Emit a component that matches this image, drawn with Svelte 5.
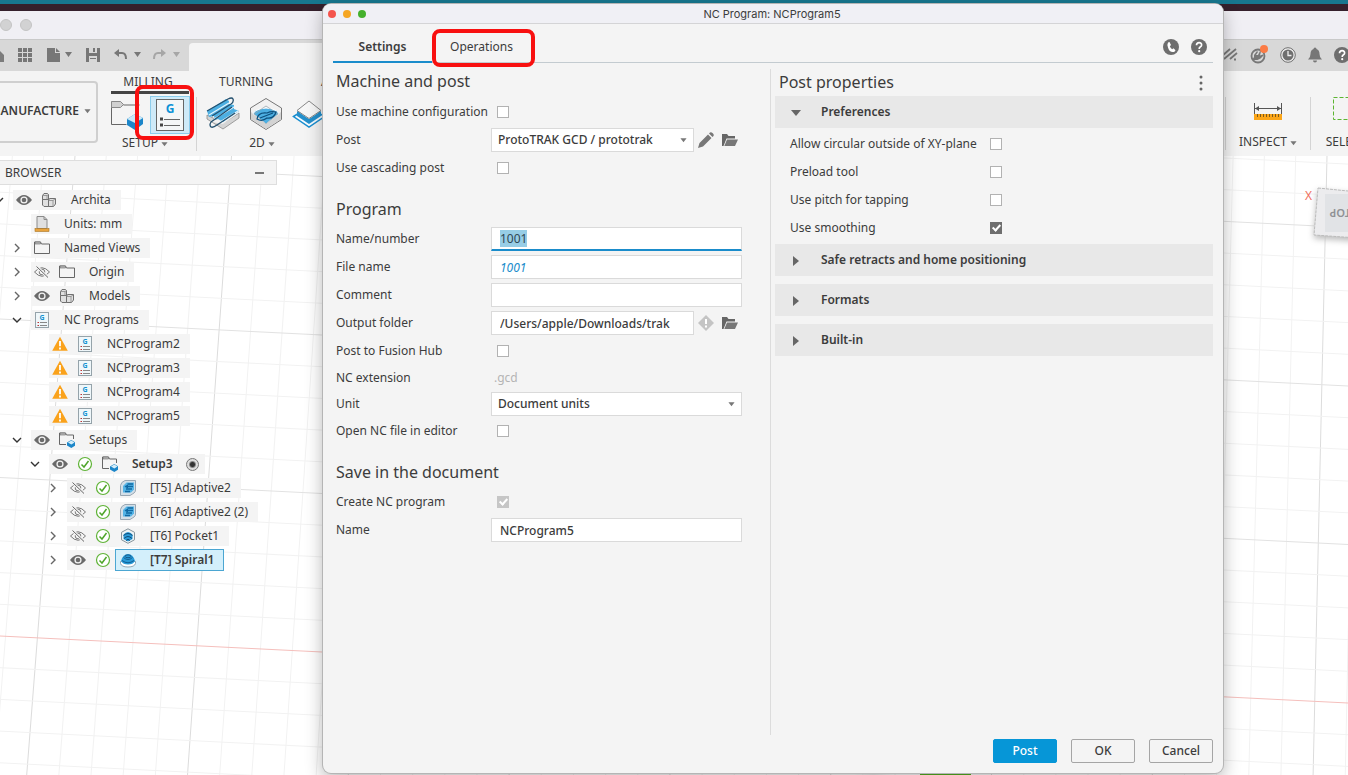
<script lang="ts">
    import { onMount } from 'svelte';

    type Row = {
        depth: number;
        arrow?: 'open' | 'closed';
        icons: string[];
        label: string;
        bold?: boolean;
        radio?: boolean;
        selected?: boolean;
    };

    const tree: Row[] = [
        { depth: 0, arrow: 'open', icons: ['eye', 'bodies'], label: 'Archita' },
        { depth: 1, icons: ['units'], label: 'Units: mm' },
        { depth: 1, arrow: 'closed', icons: ['folder'], label: 'Named Views' },
        { depth: 1, arrow: 'closed', icons: ['hidden', 'folder'], label: 'Origin' },
        { depth: 1, arrow: 'closed', icons: ['eye', 'bodies'], label: 'Models' },
        { depth: 1, arrow: 'open', icons: ['nc'], label: 'NC Programs' },
        { depth: 2, icons: ['warning', 'nc'], label: 'NCProgram2' },
        { depth: 2, icons: ['warning', 'nc'], label: 'NCProgram3' },
        { depth: 2, icons: ['warning', 'nc'], label: 'NCProgram4' },
        { depth: 2, icons: ['warning', 'nc'], label: 'NCProgram5' },
        { depth: 1, arrow: 'open', icons: ['eye', 'setup'], label: 'Setups' },
        { depth: 2, arrow: 'open', icons: ['eye', 'ok', 'setup'], label: 'Setup3', bold: true, radio: true },
        { depth: 3, arrow: 'closed', icons: ['hidden', 'ok', 'adaptive'], label: '[T5] Adaptive2' },
        { depth: 3, arrow: 'closed', icons: ['hidden', 'ok', 'adaptive'], label: '[T6] Adaptive2 (2)' },
        { depth: 3, arrow: 'closed', icons: ['hidden', 'ok', 'pocket'], label: '[T6] Pocket1' },
        { depth: 3, arrow: 'closed', icons: ['eye', 'ok', 'spiral'], label: '[T7] Spiral1', bold: true, selected: true },
    ];

    // the ground grid, seen slightly from the side
    const columns = Array.from({ length: 46 }, (_, k) => k - 3).map((i) => ({
        x1: 75 + 31.3 * i,
        x2: 26.7 + 32.16 * i,
        major: i % 5 === 0,
    }));
    const rows = Array.from({ length: 26 }, (_, k) => k - 19).map((j) => ({
        y1: 480 + 31.7 * j,
        y2: 547 + 31.7 * j,
        major: j % 5 === 0,
        axis: j === 0,
    }));

    let tab = $state('settings');
    let useMachine = $state(false);
    let cascading = $state(false);
    let toHub = $state(false);
    let openInEditor = $state(false);
    let nameNumber = $state('1001');
    let fileName = $state('1001');
    let comment = $state('');
    let folder = $state('/Users/apple/Downloads/trak');
    let programName = $state('NCProgram5');

    let preferences = $state([
        { id: 'circular', label: 'Allow circular outside of XY-plane', on: false },
        { id: 'preload', label: 'Preload tool', on: false },
        { id: 'pitch', label: 'Use pitch for tapping', on: false },
        { id: 'smoothing', label: 'Use smoothing', on: true },
    ]);
    let preferencesOpen = $state(true);
    const closedSections = ['Safe retracts and home positioning', 'Formats', 'Built-in'];

    let nameInput: HTMLInputElement;

    onMount(() => {
        nameInput.focus();
        nameInput.select();
    });
</script>

{#snippet caret()}
    <svg class="caret" width="8" height="5" viewBox="0 0 8 5"><path d="M0.500 0h7L4 4.500z" fill="#777" /></svg>
{/snippet}

{#snippet icon(name)}
    <svg class="icon" width="16" height="16" viewBox="0 0 16 16" fill="none">
        {#if name === 'eye'}
            <path d="M0 8Q8-2 16 8Q8 18 0 8z" fill="#6a6a6a" />
            <circle cx="8" cy="8" r="3.6" fill="#f4f4f4" />
            <circle cx="8" cy="8" r="2.3" fill="#6a6a6a" />
        {:else if name === 'hidden'}
            <path d="M0.5 8Q8-0.5 15.5 8Q8 16.5 0.5 8z" stroke="#777" />
            <circle cx="8" cy="8" r="2.8" stroke="#777" />
            <path d="M2.5 2.5l11.5 11" stroke="#f4f4f4" stroke-width="3" />
            <path d="M2.5 2.5l11.5 11" stroke="#666" />
        {:else if name === 'bodies'}
            <path d="M1.500 3.500l1.500-2h3.500l1 1v5h-6zM1.500 7.500h6v7h-4.500l-1.500-1.500zM7.500 8.500l1-2h6v5.500l-2 2.500h-5z" fill="#e0e0e0" stroke="#707070" />
            <path d="M7.500 8.500h4.500v6M12 8.500l2.500-2M1.500 3.500h4.500v4M6 3.500l1.500-1" stroke="#888" stroke-width="0.800" />
        {:else if name === 'units'}
            <path d="M3 0.500h7l3 3v9h-10z" fill="#e0e0e0" stroke="#8a8a8a" />
            <path d="M10 0.500v3h3" stroke="#8a8a8a" />
            <rect x="1" y="12.500" width="14" height="3" fill="#e8a33d" stroke="#a87423" stroke-width="0.600" />
        {:else if name === 'folder'}
            <path d="M0.500 13.500V2h6l1 2h8v9.500z" stroke="#666" />
            <path d="M1 2h5.500v2H1z" fill="#bbb" stroke="#666" stroke-width="0.600" />
        {:else if name === 'setup'}
            <path d="M7 12.500H0.500V1h6l1 2h7v4" stroke="#666" />
            <path d="M1 1h5.500v2H1z" fill="#bbb" stroke="#666" stroke-width="0.600" />
            <path d="M8 10.500l4.300-2.500 4.200 2.500v3L12.300 16 8 13.500z" fill="#1c86c9" />
            <path d="M9 10.600l3.300-2 3.200 2-3.200 1.900z" fill="#d5eefa" />
        {:else if name === 'nc'}
            <rect x="1.500" y="0.500" width="13" height="15" fill="#eff7fa" stroke="#95a3aa" />
            <text x="8" y="7.500" font-size="7" font-weight="700" text-anchor="middle" fill="#1592d2">G</text>
            <path d="M3.500 10.500h1.500M3.500 13.500h1.500" stroke="#b33" />
            <path d="M6 10.500h7M6 13.500h7" stroke="#888" />
        {:else if name === 'warning'}
            <path d="M8 0.800l7.800 14H0.200z" fill="#faa21b" />
            <path d="M8 5v5.200M8 11.500v2" stroke="#fff" stroke-width="1.800" />
        {:else if name === 'ok'}
            <circle cx="8" cy="8" r="6.500" fill="#fff" stroke="#5fb336" stroke-width="1.200" />
            <path d="M4.500 8.500l2.500 2.500 4.500-6" stroke="#4ea52a" stroke-width="1.500" />
        {:else if name === 'adaptive'}
            <path d="M5 0.500h10.500v9.500q0 2-1.500 3t-4 2.500H0.500V5.500Q1 2 5 0.500z" fill="#d3dfe8" stroke="#99a7b3" />
            <path d="M6.500 2.500h7.500v7l-3 3H3V6z" fill="#55b4e6" />
            <path d="M13 4H7.500M13 6.500H5.500M12 9H6M10 11.500H5" stroke="#0f68a3" stroke-width="1.300" />
            <path d="M8 4.500L4.500 6.500 8 8.500z" fill="#0f68a3" />
        {:else if name === 'pocket'}
            <path d="M8 0.800l6.500 3.500v7.500L8 15.300 1.500 11.800V4.300z" fill="#eef3f5" stroke="#87949b" />
            <path d="M3.500 6.500Q8 1.500 12.500 6.500v4.500L8 13.500 3.500 11z" fill="#2a9bd8" />
            <path d="M3.500 7.500q4.500-4 9 0M4 10.500q4-4 8 0M6 12.500q2-2.500 4 0" stroke="#0c4a78" />
        {:else if name === 'spiral'}
            <path d="M0.500 9.500v2q1 3.500 7.500 3.500t7.500-3.500v-2z" fill="#fff" stroke="#92a7b5" />
            <path d="M1 9Q3 2 8 2t7 7q-2 3.500-7 3.500T1 9z" fill="#2a9bd8" />
            <ellipse cx="8" cy="4.300" rx="3" ry="1.400" stroke="#0c4a78" stroke-width="0.800" />
            <path d="M3.500 5.500q4.500 4 9 0M2 8.500q6 4.500 12 0" stroke="#0c5a90" stroke-width="0.900" />
        {/if}
    </svg>
{/snippet}

{#snippet openFolder()}
    <svg width="16" height="14" viewBox="0 0 16 14"><path d="M0 13V1h5l1.500 2H13v2.500H4.500L1.500 13z" fill="#666" /><path d="M5 6.500h11L13 13H2.300z" fill="#777" /></svg>
{/snippet}

{#snippet question(size)}
    <svg width={size} height={size} viewBox="0 0 16 16">
        <circle cx="8" cy="8" r="8" fill="#6e6e6e" />
        <path d="M5.500 6.300Q5.500 3.700 8.100 3.700T10.600 6.100Q10.600 7.300 9.200 8.100Q8.200 8.700 8.200 9.900" fill="none" stroke="#fff" stroke-width="1.700" />
        <circle cx="8.200" cy="12.200" r="1.100" fill="#fff" />
    </svg>
{/snippet}

<div class="desktop">
    <div class="menu-strip"></div>

    <div class="titlebar">
        <span class="dot"></span>
        <span class="dot"></span>
    </div>

    <div class="quickbar">
        <div class="quick-tools">
            <svg width="190" height="28" viewBox="0 0 190 28">
                <path d="M-8 13l6-6 6 6v7h-4z" fill="#7c7c7c" />
                <g fill="#777">
                    {#each [0, 5, 10] as y}
                        {#each [0, 5, 10] as x}
                            <rect x={18 + x} y={6 + y} width="4" height="4" />
                        {/each}
                    {/each}
                    <path d="M47 6h8v5h5v9H47z" />
                    <path d="M56 6l4 4h-4z" />
                    <path d="M86 6h14v14H86zM89 6v5h8V6zM89 14v6h8v-6z" fill-rule="evenodd" />
                    <rect x="93" y="6" width="2" height="4" />
                    <rect x="90" y="16" width="6" height="1" />
                    <path d="M65 10h7l-3.500 5zM134 10h7l-3.500 5z" />
                    <path d="M119 7v8l-5-4z" />
                </g>
                <path d="M118 11h4q4 0 4 6" fill="none" stroke="#777" stroke-width="2" />
                <g fill="#a6a6a6">
                    <path d="M161 7v8l5-4zM173 10h7l-3.500 5z" />
                    <path d="M162 11h-4q-4 0-4 6" fill="none" stroke="#a6a6a6" stroke-width="2" />
                </g>
            </svg>
        </div>
        <div class="doc-tab"></div>
        <div class="account">
            <svg width="16" height="16" viewBox="0 0 16 16" fill="none" stroke="#777" stroke-width="1.800"><path d="M0 9l8-7M2 12L14 2M8 12l7-6" /><path d="M12 12.500h2" /></svg>
            <svg width="18" height="20" viewBox="0 0 18 20">
                <circle cx="8" cy="11" r="6.500" fill="none" stroke="#777" stroke-width="1.800" />
                <path d="M2 15l2-3 0-2 3-4 1 1-2 3 2 0 2-4 1 0.500-1 4 3-1 0.500 1-3 3-3 1.500z" fill="#777" />
                <circle cx="14" cy="4" r="4" fill="#fb7b45" />
            </svg>
            <svg width="16" height="16" viewBox="0 0 16 16"><circle cx="8" cy="8" r="7.300" fill="#eee" stroke="#6f6f6f" /><circle cx="8" cy="8" r="5.500" fill="#6f6f6f" /><path d="M8 4v4.500h3.500" fill="none" stroke="#eee" stroke-width="1.300" /></svg>
            <svg width="14" height="16" viewBox="0 0 14 16"><path d="M7 0.500q1.500 0 1.500 1.500Q11.500 3 11.500 7q0 3.500 2.500 5.500H0Q2.500 10.500 2.500 7 2.500 3 5.500 2 5.500 0.500 7 0.500zM5 13.500h4q0 2-2 2t-2-2z" fill="#777" /></svg>
            {@render question(16)}
        </div>
    </div>

    <div class="ribbon">
        <button class="workspace">MANUFACTURE {@render caret()}</button>
        <div class="ribbon-main">
            <nav class="ribbon-tabs">
                <a href="#milling" class="active">MILLING</a>
                <a href="#turning">TURNING</a>
                <a href="#additive">ADDITIVE</a>
            </nav>
            <div class="tools">
                <div class="group setup-group">
                    <div class="group-icons">
                        <svg width="34" height="36" viewBox="0 0 34 36">
                            <path d="M0.500 27.500V5h9l3 3h16M0.500 27.500h15" fill="none" stroke="#666" />
                            <path d="M0.500 4.500h9l3 3-3 3h-9z" fill="#d0d0d0" stroke="#888" />
                            <path d="M16 22l8-5 8 4v6l-8 6-8-5z" fill="#1c86c9" />
                            <path d="M16 22l8-5 8 4-8 5z" fill="#c9e9f8" />
                        </svg>
                        <span class="nc-button">
                            <svg width="28" height="32" viewBox="0 0 28 32">
                                <rect x="0.500" y="0.500" width="27" height="31" fill="#f4f6f7" stroke="#666" />
                                <text x="14" y="14" font-size="12" font-weight="700" text-anchor="middle" fill="#0d92d6">G</text>
                                <path d="M4 20h3M4 26h3" stroke="#444" stroke-width="3" />
                                <path d="M8 20.500h16M8 26.500h16" stroke="#666" />
                            </svg>
                        </span>
                    </div>
                    <span class="group-label">SETUP {@render caret()}</span>
                </div>
                <div class="group group-2d">
                    <div class="group-icons">
                        <svg width="34" height="34" viewBox="0 0 34 34">
                            <path d="M1 18v4l16 10 16-11v-5L17 26z" fill="#d4d4d4" stroke="#8a8a8a" stroke-width="0.800" />
                            <path d="M6 25L22 15l10 1-15 11z" fill="#f2f2f2" />
                            <path d="M1 14L20 2l3 2v3l5 1v4l5 2-16 11-5-3-3 1-1-4-5 1z" fill="#4dafe2" />
                            <path d="M3 18L23 6M8 22l20-12M14 25l18-11" stroke="#e8f5fc" stroke-width="1.200" />
                            <path d="M1 14L22 2q4-2 5 0 1 3-2 5L6 19M5 25q-2 3 0 5 2 1 6-2l18-12M5 25L26 10" fill="none" stroke="#24506e" stroke-width="1.300" />
                        </svg>
                        <svg width="34" height="34" viewBox="0 0 34 34">
                            <path d="M17 1.500l15.500 9.500v11.500L17 32.500 1.500 22.500V11z" fill="#f1f1f1" stroke="#777" />
                            <path d="M2 15l15 12 15-12v7L17 32 2 22z" fill="#d3d3d3" />
                            <path d="M7 13.500q10-5 20 0l3 3L17 27 4 16.500z" fill="#4dafe2" stroke="#fff" />
                            <path d="M17 9l12 8-12 10L5 17z" fill="none" stroke="#9ba7ae" stroke-width="0.800" />
                            <path d="M8 22q1-7 10-6 4-2 9-1-2 7-9 6-5 4-10 1zM11 21l13-5" fill="none" stroke="#0d4f7c" stroke-width="1.200" />
                        </svg>
                        <svg width="34" height="34" viewBox="0 0 34 34">
                            <path d="M1.500 19.500L17 10l15.500 9.500L17 30z" fill="#f8fcff" stroke="#1c8fd0" stroke-width="1.500" />
                            <path d="M5 14l12 8 12-8v5l-12 8-12-8z" fill="#2490cc" />
                            <path d="M17 4l12 9.500-12 8-12-8z" fill="#f7f7f7" stroke="#888" />
                        </svg>
                    </div>
                    <span class="group-label">2D {@render caret()}</span>
                </div>
            </div>
        </div>
        <div class="ribbon-end">
            <div class="group inspect">
                <svg width="30" height="36" viewBox="0 0 30 36">
                    <path d="M1.500 6v11M28.500 6v11M2 11.500h26" stroke="#555" />
                    <path d="M2 11.500l4-2.500v5zM28 11.500l-4-2.500v5z" fill="#555" />
                    <rect x="1" y="17" width="28" height="6" fill="#fba61a" />
                    <path d="M4.500 17v3M7.500 17v3M10.500 17v3M13.500 17v3M16.500 17v3M19.500 17v3M22.500 17v3M25.500 17v3" stroke="#7b5a1c" />
                </svg>
                <span class="group-label">INSPECT {@render caret()}</span>
            </div>
            <div class="group select-group">
                <svg width="44" height="36" viewBox="0 0 44 36"><rect x="9.500" y="0.500" width="32" height="22" fill="none" stroke="#5cb531" stroke-dasharray="4 2" /></svg>
                <span class="group-label">SELECT</span>
            </div>
        </div>
        <div class="mark mark-tool"></div>
    </div>

    <main class="canvas">
        <svg class="scene" viewBox="0 0 1348 619" preserveAspectRatio="xMinYMin slice">
            {#each columns as line}
                <line x1={line.x1} y1="0" x2={line.x2} y2="619" stroke={line.major ? '#dcdcdc' : '#f2f2f2'} />
            {/each}
            {#each rows as line}
                <line x1="0" y1={line.y1} x2="1348" y2={line.y2} stroke={line.axis ? '#f5bfbc' : line.major ? '#e2e2e2' : '#f2f2f2'} />
            {/each}
            <rect x="920" y="615" width="51" height="4" fill="#57b520" />
            <g filter="drop-shadow(0 3px 3px #bbb)">
                <path d="M1318 32l40 4v46l-44-3z" fill="#ececee" stroke="#bbb" stroke-dasharray="3 1" />
                <path d="M1325 38h31v38h-31z" fill="#e1e3e6" />
            </g>
            <text x="1305" y="44" font-size="12" fill="#f0705e">X</text>
            <text x="-1351" y="-53" font-size="11" font-weight="600" fill="#8f9195" transform="rotate(180)">TOP</text>
        </svg>

        <aside class="browser">
            <header>
                <span>BROWSER</span>
                <span class="minus"></span>
            </header>
            {#each tree as row}
                <div class="row" style="margin-left: {row.depth * 18 - 15}px">
                    <span class="arrow">
                        {#if row.arrow}
                            <svg width="10" height="10" viewBox="0 0 10 10" fill="none" stroke={row.arrow === 'open' ? '#333' : '#666'} stroke-width="1.400">
                                <path d={row.arrow === 'open' ? 'M1 3l4 4 4-4' : 'M3 1l4 4-4 4'} />
                            </svg>
                        {/if}
                    </span>
                    <span class="chip" class:has-selection={row.selected}>
                        {#each row.icons.slice(0, -1) as name}
                            {@render icon(name)}
                        {/each}
                        <span class="item" class:selected={row.selected}>
                            {@render icon(row.icons[row.icons.length - 1])}
                            <span class="name" class:bold={row.bold}>{row.label}</span>
                        </span>
                        {#if row.radio}
                            <input type="radio" name="active-setup" aria-label="Active setup" checked />
                        {/if}
                    </span>
                </div>
            {/each}
        </aside>
    </main>

    <div class="dialog" role="dialog" aria-label="NC Program: NCProgram5">
        <div class="dialog-title">
            <span class="light red"></span>
            <span class="light amber"></span>
            <span class="light green"></span>
            <span class="title-text">NC Program: NCProgram5</span>
        </div>

        <div class="tabs">
            <button class:current={tab === 'settings'} onclick={() => (tab = 'settings')}>Settings</button>
            <button class:current={tab === 'operations'} onclick={() => (tab = 'operations')}>Operations</button>
            <div class="mark mark-tab"></div>
            <div class="tab-icons">
                <svg width="16" height="16" viewBox="0 0 16 16">
                    <circle cx="8" cy="8" r="8" fill="#6e6e6e" />
                    <path d="M5 3.500l1.500-0.500 1.500 3-1.200 1.200q0.700 2 2.400 3l1.300-0.900 2 2-1 1.500Q6.500 14 5 8.500 4 5 5 3.500z" fill="#fff" />
                </svg>
                {@render question(16)}
            </div>
        </div>

        <div class="body">
            <section class="form">
                <h2>Machine and post</h2>
                <div class="field">
                    <label for="machine">Use machine configuration</label>
                    <input id="machine" type="checkbox" bind:checked={useMachine} />
                </div>
                <div class="field">
                    <label for="post">Post</label>
                    <div class="select">
                        <select id="post"><option>ProtoTRAK GCD / prototrak</option></select>
                        {@render caret()}
                    </div>
                    <button class="icon-button" aria-label="Edit post">
                        <svg width="16" height="16" viewBox="0 0 16 16"><path d="M0 16l1.500-5L10 2.500l3.500 3.500L5 14.500zM11 1.500l1-1q1.200-0.800 2.500 0.500l0.500 0.500q1.200 1.300 0.500 2.500l-1 1z" fill="#777" /></svg>
                    </button>
                    <button class="icon-button" aria-label="Browse posts">{@render openFolder()}</button>
                </div>
                <div class="field">
                    <label for="cascading">Use cascading post</label>
                    <input id="cascading" type="checkbox" bind:checked={cascading} />
                </div>

                <h2>Program</h2>
                <div class="field">
                    <label for="number">Name/number</label>
                    <input id="number" class="focused" type="text" bind:value={nameNumber} bind:this={nameInput} />
                </div>
                <div class="field">
                    <label for="file">File name</label>
                    <input id="file" class="derived" type="text" bind:value={fileName} />
                </div>
                <div class="field">
                    <label for="comment">Comment</label>
                    <input id="comment" type="text" bind:value={comment} />
                </div>
                <div class="field">
                    <label for="folder">Output folder</label>
                    <input id="folder" type="text" bind:value={folder} />
                    <button class="icon-button" aria-label="Folder warning" disabled>
                        <svg width="16" height="16" viewBox="0 0 16 16"><path d="M8 0l8 8-8 8-8-8z" fill="#c4c4c4" /><path d="M8 4v5M8 10.500v2" stroke="#fff" stroke-width="2" /></svg>
                    </button>
                    <button class="icon-button" aria-label="Browse folders">{@render openFolder()}</button>
                </div>
                <div class="field">
                    <label for="hub">Post to Fusion Hub</label>
                    <input id="hub" type="checkbox" bind:checked={toHub} />
                </div>
                <div class="field short">
                    <span class="label">NC extension</span>
                    <span class="extension">.gcd</span>
                </div>
                <div class="field short">
                    <label for="unit">Unit</label>
                    <div class="select">
                        <select id="unit"><option>Document units</option></select>
                        {@render caret()}
                    </div>
                </div>
                <div class="field">
                    <label for="editor">Open NC file in editor</label>
                    <input id="editor" type="checkbox" bind:checked={openInEditor} />
                </div>

                <h2>Save in the document</h2>
                <div class="field">
                    <label for="create">Create NC program</label>
                    <input id="create" type="checkbox" checked disabled />
                </div>
                <div class="field">
                    <label for="name">Name</label>
                    <input id="name" type="text" bind:value={programName} />
                </div>
            </section>

            <section class="properties">
                <div class="properties-head">
                    <h2>Post properties</h2>
                    <button class="more" aria-label="More">
                        <svg width="4" height="16" viewBox="0 0 4 16" fill="#666"><circle cx="2" cy="2" r="1.500" /><circle cx="2" cy="8" r="1.500" /><circle cx="2" cy="14" r="1.500" /></svg>
                    </button>
                </div>
                <button class="section" aria-expanded={preferencesOpen} onclick={() => (preferencesOpen = !preferencesOpen)}>
                    <svg width="12" height="12" viewBox="0 0 12 12"><path d="M1 4h10L6 10z" fill="#666" /></svg>
                    Preferences
                </button>
                {#if preferencesOpen}
                    <div class="preferences">
                        {#each preferences as pref}
                            <div class="field">
                                <label for={pref.id}>{pref.label}</label>
                                <input id={pref.id} type="checkbox" bind:checked={pref.on} />
                            </div>
                        {/each}
                    </div>
                {/if}
                {#each closedSections as title}
                    <button class="section" aria-expanded="false">
                        <svg width="12" height="12" viewBox="0 0 12 12"><path d="M3 2v10l6-5z" fill="#666" /></svg>
                        {title}
                    </button>
                {/each}
            </section>
        </div>

        <footer>
            <button class="primary">Post</button>
            <button>OK</button>
            <button>Cancel</button>
        </footer>
    </div>
</div>

<style>
    :global(body) {
        margin: 0;
        background: #fff;
    }

    .desktop {
        position: relative;
        display: flex;
        flex-direction: column;
        min-height: 100vh;
        overflow: hidden;
        font: 12px/16px "Noto Sans", "Open Sans", sans-serif;
        color: #3c3c3c;
    }

    button, input, select {
        margin: 0;
        font: inherit;
        color: inherit;
        box-sizing: border-box;
    }

    button {
        padding: 0;
        border: 0;
        background: none;
    }

    svg {
        display: block;
        flex: none;
    }

    .menu-strip {
        height: 7px;
        background: #35202c;
        border-top: 4px solid #17778f;
    }

    .titlebar {
        display: flex;
        align-items: center;
        gap: 8px;
        height: 28px;
        background: #f0eff4;
        border-bottom: 1px solid #c9c9c9;
    }

    .dot {
        box-sizing: border-box;
        width: 12px;
        height: 12px;
        border: 1px solid #c4c4c4;
        border-radius: 50%;
        background: #d2d2d3;
    }

    .quickbar {
        display: flex;
        align-items: flex-end;
        height: 31px;
        background: #d8d8d8;
    }

    .quick-tools {
        width: 189px;
        overflow: hidden;
        padding-bottom: 1px;
    }

    .doc-tab {
        flex: 1;
        height: 28px;
        background: #f4f4f4;
        border-top-left-radius: 4px;
    }

    .account {
        display: flex;
        align-items: center;
        gap: 12px;
        width: 126px;
        height: 30px;
        padding-bottom: 1px;
        overflow: hidden;
    }

    .ribbon {
        position: relative;
        display: flex;
        height: 85px;
        background: #f4f4f4;
    }

    .workspace {
        display: flex;
        align-items: center;
        justify-content: flex-end;
        gap: 5px;
        width: 98px;
        height: 62px;
        margin-top: 10px;
        padding: 0 5px 2px 0;
        border: 2px solid #cfcfcf;
        border-left: 0;
        border-radius: 0 4px 4px 0;
        font-weight: 600;
        white-space: nowrap;
    }

    .caret {
        display: inline-block;
        width: 7px;
    }

    .ribbon-main {
        flex: 1;
        min-width: 0;
        padding-left: 13px;
    }

    .ribbon-tabs {
        display: flex;
        height: 23px;
        line-height: 22px;
    }

    .ribbon-tabs a {
        width: 74px;
        margin-right: 24px;
        padding-right: 4px;
        text-align: center;
        color: inherit;
        text-decoration: none;
    }

    .ribbon-tabs a.active {
        margin-right: 20px;
        border-bottom: 3px solid #444;
        height: 20px;
    }

    .tools {
        display: flex;
        gap: 10px;
        padding-top: 3px;
    }

    .group {
        display: flex;
        flex-direction: column;
        align-items: center;
    }

    .group-icons {
        display: flex;
        gap: 9px;
        height: 38px;
    }

    .setup-group .group-icons {
        gap: 6px;
    }

    .group-2d {
        margin-left: -1px;
    }

    .nc-button {
        display: flex;
        justify-content: center;
        align-items: center;
        width: 38px;
        height: 36px;
        background: #cfeaf8;
        outline: 1px solid #8ccdec;
    }

    .group-label {
        white-space: nowrap;
    }

    .setup-group {
        padding-right: 7px;
        border-right: 1px solid #d4d4d4;
    }

    .setup-group .group-label {
        padding-right: 10px;
    }

    .group-2d .group-label {
        padding-right: 8px;
    }

    .ribbon-end {
        display: flex;
        width: 122px;
        height: 53px;
        margin-top: 26px;
        overflow: hidden;
        border-left: 1px solid #d4d4d4;
    }

    .ribbon-end .group-label {
        padding-top: 1px;
    }

    .inspect {
        flex: none;
        width: 84px;
        border-right: 1px solid #d4d4d4;
    }

    .select-group {
        flex: none;
        width: 70px;
    }

    .mark {
        position: absolute;
        box-sizing: border-box;
        border: 4px solid #f81010;
        border-radius: 8px;
        pointer-events: none;
    }

    .mark-tool {
        left: 135px;
        top: 14px;
        width: 59px;
        height: 55px;
    }

    .canvas {
        position: relative;
        flex: 1;
        background: #fff;
    }

    .scene {
        position: absolute;
        inset: 0;
        width: 100%;
        height: 100%;
    }

    .browser {
        position: relative;
        width: 277px;
        padding-top: 4px;
    }

    .browser header {
        box-sizing: border-box;
        display: flex;
        align-items: center;
        justify-content: space-between;
        height: 25px;
        margin-bottom: 3px;
        padding: 0 12px 0 5px;
        background: #f4f4f4;
        border: 1px solid #dedede;
        border-left: 0;
    }

    .minus {
        width: 9px;
        height: 2px;
        background: #777;
    }

    .row {
        display: flex;
        align-items: center;
        height: 24px;
    }

    .arrow {
        display: flex;
        justify-content: center;
        width: 28px;
    }

    .chip {
        display: flex;
        align-items: center;
        gap: 9px;
        height: 20px;
        padding: 0 10px 0 3px;
        background: #f4f4f4;
        white-space: nowrap;
    }

    .chip.has-selection {
        padding-right: 0;
    }

    .item {
        display: flex;
        align-items: center;
        gap: 14px;
    }

    .item.selected {
        height: 20px;
        margin-left: -5px;
        padding: 0 8px 0 4px;
        background: #d3effb;
        border: 1px solid #4ba6d2;
    }

    .bold {
        font-weight: 600;
    }

    input[type="radio"] {
        appearance: none;
        width: 13px;
        height: 13px;
        margin-left: 4px;
        margin-right: -4px;
        border: 1px solid #777;
        border-radius: 50%;
        background: radial-gradient(#333 0 2px, #ddd 4px);
    }

    .dialog {
        position: absolute;
        top: 4px;
        right: 125px;
        bottom: 2px;
        left: 323px;
        display: flex;
        flex-direction: column;
        background: #f4f4f4;
        border-radius: 8px;
        box-shadow: 0 0 0 1px #b5b5b5, 0 6px 18px rgba(0, 0, 0, 0.3);
    }

    .dialog-title {
        display: flex;
        align-items: center;
        gap: 7px;
        height: 19px;
        padding-left: 5px;
        padding-right: 52px;
        border-bottom: 1px solid #d4d4d6;
        border-radius: 8px 8px 0 0;
        background: #f0f0f5;
    }

    .light {
        width: 8px;
        height: 8px;
        border-radius: 50%;
    }

    .red {
        background: #f4544d;
    }

    .amber {
        background: #f5a623;
    }

    .green {
        background: #45b02c;
    }

    .title-text {
        flex: 1;
        text-align: center;
        font-family: Inter, sans-serif;
        font-size: 11px;
    }

    .tabs {
        position: relative;
        display: flex;
        height: 38px;
        margin: 0 10px;
        border-bottom: 1px solid #c3cbd0;
    }

    .tabs button {
        width: 99px;
        height: 39px;
        padding-top: 8px;
        border-bottom: 2px solid transparent;
    }

    .tabs button.current {
        font-weight: 600;
        border-color: #1a8ccb;
    }

    .mark-tab {
        left: 99px;
        top: 5px;
        width: 103px;
        height: 38px;
    }

    .tab-icons {
        display: flex;
        align-items: center;
        gap: 12px;
        margin-left: auto;
        padding: 8px 6px 0 0;
    }

    .body {
        display: grid;
        grid-template-columns: 447px 1fr;
        flex: 1;
    }

    h2 {
        margin: 0;
        padding-top: 11px;
        font-size: 16px;
        font-weight: 400;
        line-height: 32px;
    }

    .form {
        padding: 0 28px 0 13px;
    }

    .form h2:first-child {
        padding: 2px 0 1px;
    }

    .field {
        display: flex;
        align-items: center;
        height: 28px;
    }

    .field.short {
        height: 26px;
    }

    .form label, .form .label {
        flex: none;
        width: 155px;
        white-space: nowrap;
    }

    input[type="text"], select {
        flex: 1;
        min-width: 0;
        height: 24px;
        padding: 0 8px;
        border: 1px solid #dadada;
        border-radius: 0;
        outline: none;
        background: #fff;
        font-weight: 500;
    }

    input[type="text"].focused {
        border-bottom: 2px solid #1a8ccb;
        font-weight: 400;
    }

    input.focused::selection {
        background: #97cde6;
        color: #2e4654;
    }

    input[type="text"].derived {
        color: #1a8ccb;
        font-style: italic;
        font-weight: 400;
    }

    .select {
        position: relative;
        display: flex;
        flex: 1;
    }

    select {
        appearance: none;
        padding: 0 6px;
    }

    .select .caret,
    .select :global(.caret) {
        position: absolute;
        right: 7px;
        top: 10px;
    }

    .icon-button {
        flex: none;
        display: flex;
        justify-content: center;
        width: 24px;
    }

    .extension {
        padding-left: 3px;
        color: #b4b4b4;
    }

    input[type="checkbox"] {
        appearance: none;
        flex: none;
        width: 12px;
        height: 12px;
        margin-left: 6px;
        border: 1px solid #b2b2b2;
        background: #fff;
    }

    input[type="checkbox"]:checked {
        border-color: #6e6e6e;
        background: #6e6e6e;
    }

    input[type="checkbox"]:disabled {
        border-color: #c6c6c6;
        background: #c6c6c6;
    }

    input[type="checkbox"]:checked::after {
        content: "";
        display: block;
        width: 3px;
        height: 6px;
        margin: 0 0 0 3px;
        border: solid #fff;
        border-width: 0 2px 2px 0;
        transform: rotate(42deg);
    }

    .properties {
        padding: 0 10px 0 4px;
        margin-top: 6px;
        border-left: 1px solid #dcdcdc;
    }

    .properties-head {
        display: flex;
        align-items: center;
        justify-content: space-between;
        height: 27px;
        padding: 0 10px 0 4px;
    }

    .properties-head h2 {
        padding: 0;
        margin-bottom: 2px;
    }

    .section {
        display: flex;
        align-items: center;
        gap: 19px;
        width: 100%;
        height: 32px;
        margin-bottom: 8px;
        padding-left: 15px;
        background: #e8e8e8;
        font-weight: 600;
    }

    .section[aria-expanded="true"] {
        margin-bottom: 2px;
    }

    .preferences {
        padding: 0 0 2px 15px;
    }

    .preferences label {
        width: 194px;
        white-space: nowrap;
    }

    footer {
        display: flex;
        justify-content: flex-end;
        gap: 14px;
        padding: 4px 10px 10px;
    }

    footer button {
        width: 64px;
        height: 24px;
        border: 1px solid #a5a5a5;
        border-radius: 2px;
        font-weight: 500;
    }

    footer button.primary {
        border-color: #0696d7;
        background: #0696d7;
        color: #fff;
    }
</style>
